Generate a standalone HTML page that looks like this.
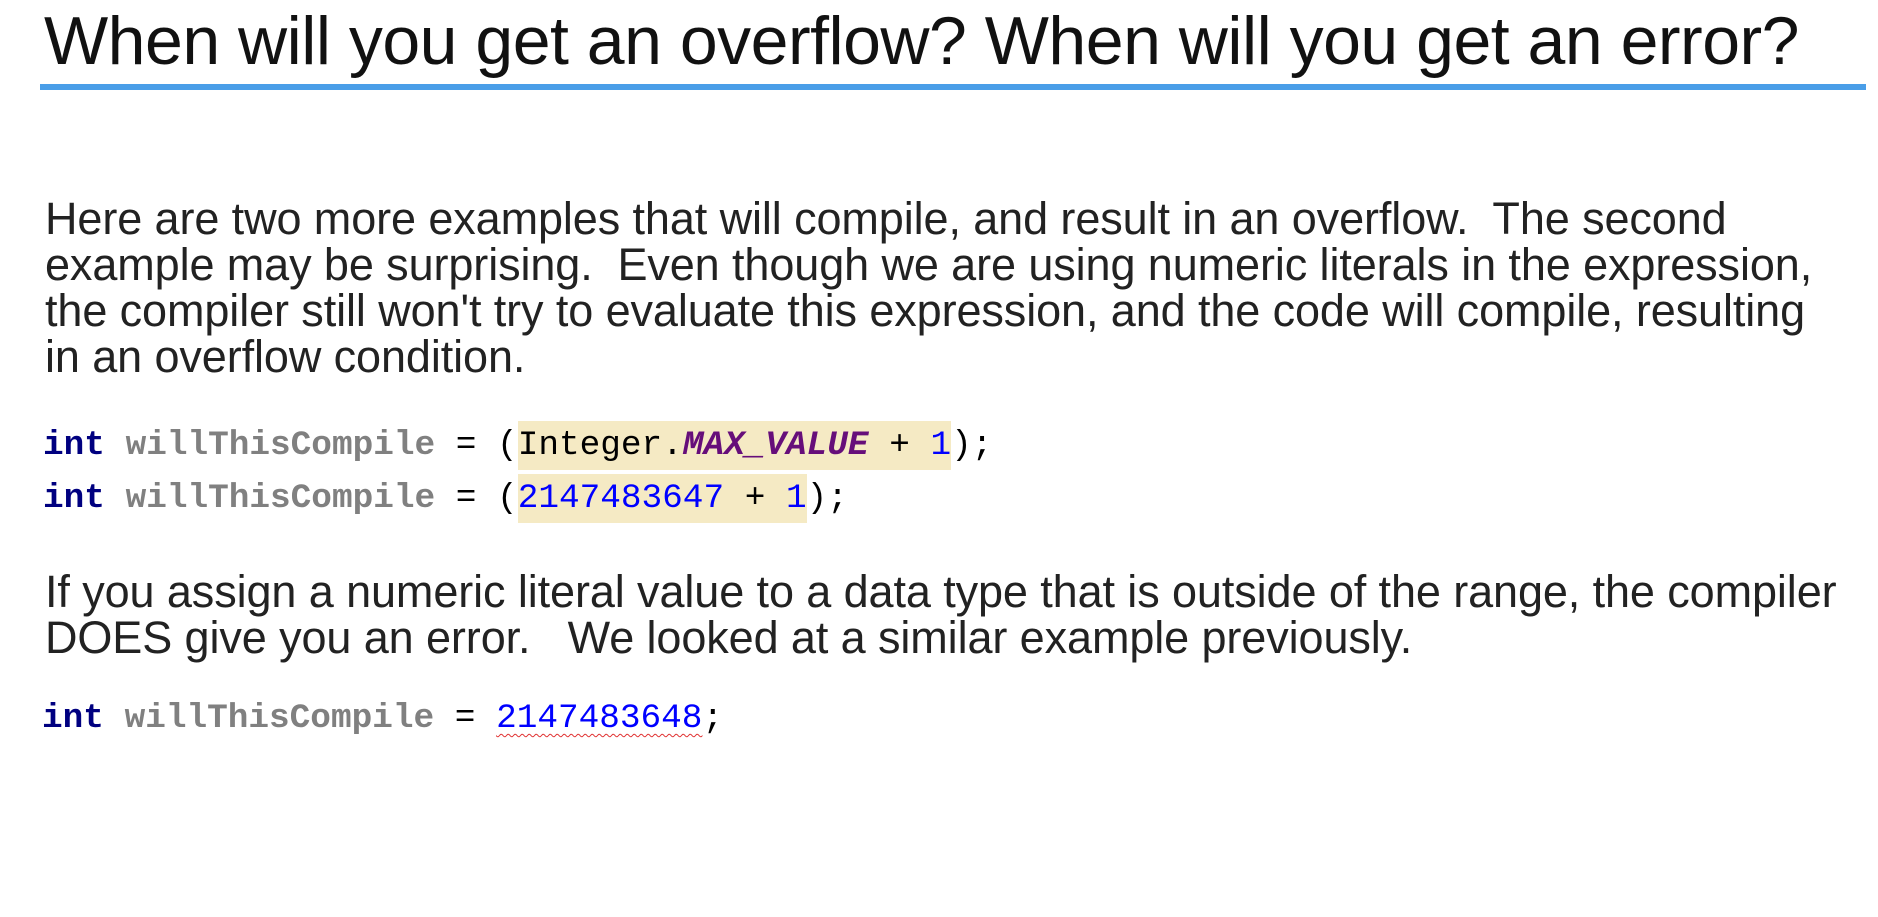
<!DOCTYPE html>
<html><head><meta charset="utf-8"><style>
html,body{margin:0;padding:0;background:#fff;width:1878px;height:917px;overflow:hidden;position:relative}
.t{position:absolute;left:44px;top:2px;font:400 68px "Liberation Sans",sans-serif;color:#111;white-space:pre;letter-spacing:-0.5px}
.bar{position:absolute;left:40px;top:84px;width:1826px;height:6px;background:#4a9ee8}
.p{position:absolute;left:45px;font:300 45px "Liberation Sans",sans-serif;color:#222;white-space:pre;line-height:46px;letter-spacing:-0.1px}
.c{position:absolute;font:700 34.4px "Liberation Mono",monospace;white-space:pre;color:#000;line-height:44px}
.k{color:#000080}.v{color:#808080}.n{color:#0000ff;font-weight:400}.m{color:#660e7a;font-style:italic}
.o{font-weight:400}
.h{background:#f5eac4;padding:5px 0}
.sq{text-decoration:underline wavy #e03030;text-decoration-thickness:1px;text-underline-offset:6px}
</style></head><body>
<div class="t">When will you get an overflow? When will you get an error?</div>
<div class="bar"></div>
<div class="p" style="top:196px">Here are two more examples that will compile, and result in an overflow.  The second
example may be surprising.  Even though we are using numeric literals in the expression,
the compiler still won't try to evaluate this expression, and the code will compile, resulting
in an overflow condition.</div>
<div class="c" style="left:43px;top:424px"><span class="k">int</span> <span class="v">willThisCompile</span><span class="o"> = (</span><span class="h"><span class="o">Integer.</span><span class="m">MAX_VALUE</span><span class="o"> + </span><span class="n">1</span></span><span class="o">);</span></div>
<div class="c" style="left:43px;top:477px"><span class="k">int</span> <span class="v">willThisCompile</span><span class="o"> = (</span><span class="h"><span class="n">2147483647</span><span class="o"> + </span><span class="n">1</span></span><span class="o">);</span></div>
<div class="p" style="top:569px">If you assign a numeric literal value to a data type that is outside of the range, the compiler
DOES give you an error.   We looked at a similar example previously.</div>
<div class="c" style="left:42px;top:697px"><span class="k">int</span> <span class="v">willThisCompile</span><span class="o"> = </span><span class="n sq">2147483648</span><span class="o">;</span></div>
</body></html>
